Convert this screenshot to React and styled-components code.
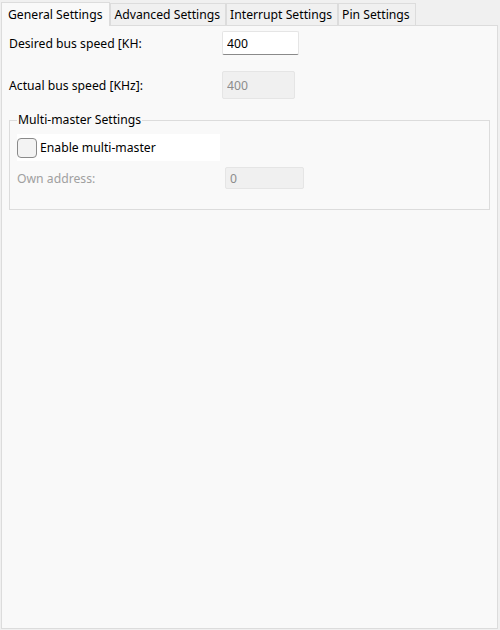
import styled, { createGlobalStyle } from "styled-components";

const GlobalStyle = createGlobalStyle`
  html, body {
    margin: 0;
    padding: 0;
    background: #f0f0f0;
    font-family: "Noto Sans", "Liberation Sans", sans-serif;
    font-size: 12.2px;
    color: #000;
  }
`;

const tabs = ["General Settings", "Advanced Settings", "Interrupt Settings", "Pin Settings"];

export default function App() {
  return (
    <>
      <GlobalStyle />
      <StyledWindow>
        <StyledTabBar>
          {tabs.map((tab, i) => (
            <StyledTab key={tab} $active={i === 0}>
              {tab}
            </StyledTab>
          ))}
        </StyledTabBar>
        <StyledPanel>
          <StyledRow>
            <StyledLabel>Desired bus speed [KH:</StyledLabel>
            <StyledInput defaultValue="400" />
          </StyledRow>
          <StyledRow $height={28}>
            <StyledLabel>Actual bus speed [KHz]:</StyledLabel>
            <StyledInput value="400" disabled readOnly $width={73} $height={28} />
          </StyledRow>
          <StyledGroup>
            <StyledLegend>Multi-master Settings</StyledLegend>
            <StyledCheckRow>
              <StyledCheckbox />
              <span>Enable multi-master</span>
            </StyledCheckRow>
            <StyledRow $indent={7} $height={22}>
              <StyledLabel $disabled $width={208}>Own address:</StyledLabel>
              <StyledInput value="0" disabled readOnly $width={79} $height={22} />
            </StyledRow>
          </StyledGroup>
        </StyledPanel>
      </StyledWindow>
    </>
  );
}

const StyledWindow = styled.div`
  width: 500px;
  height: 630px;
  display: flex;
  flex-direction: column;
`;

const StyledTabBar = styled.div`
  display: flex;
  align-items: flex-end;
  height: 25px;
  padding-left: 1px;
`;

const StyledTab = styled.div`
  height: ${(p) => (p.$active ? "24px" : "22px")};
  box-sizing: border-box;
  padding: 0 ${(p) => (p.$active ? "7px" : "5px")} 1px ${(p) => (p.$active ? "6px" : "3px")};
  display: flex;
  align-items: center;
  background: ${(p) => (p.$active ? "#f9f9f9" : "#f0f0f0")};
  border: 1px solid #dcdcdc;
  border-bottom: none;
  margin-bottom: ${(p) => (p.$active ? "-1px" : "0")};
  position: relative;
  z-index: ${(p) => (p.$active ? 1 : 0)};
  white-space: nowrap;
`;

const StyledPanel = styled.div`
  flex: 1;
  margin: 0 2px 1px 1px;
  background: #f9f9f9;
  border: 1px solid #dcdcdc;
  padding: 5px 7px 0 7px;
  display: flex;
  flex-direction: column;
`;

const StyledRow = styled.div`
  display: flex;
  align-items: center;
  height: ${(p) => p.$height || 24}px;
  margin-bottom: 16px;
  padding-left: ${(p) => p.$indent || 0}px;
`;

const StyledLabel = styled.span`
  width: ${(p) => p.$width || 213}px;
  color: ${(p) => (p.$disabled ? "#a0a0a0" : "#000")};
`;

const StyledInput = styled.input`
  box-sizing: border-box;
  width: ${(p) => p.$width || 77}px;
  height: ${(p) => p.$height || 24}px;
  padding: 0 4px;
  font-family: "Noto Sans", "Liberation Sans", sans-serif;
  font-size: 12.2px;
  color: #000;
  background: #fff;
  border: 1px solid #e5e5e5;
  border-bottom-color: #8a8a8a;
  border-radius: 2px;
  outline: none;

  &:disabled {
    background: #f0f0f0;
    color: #8c8c8c;
    border-bottom-color: #e5e5e5;
  }
`;

const StyledGroup = styled.fieldset`
  margin: -7px 0 0 0;
  width: 481px;
  box-sizing: border-box;
  border: 1px solid #dcdcdc;
  padding: 2px 0 4px 0;
`;

const StyledLegend = styled.legend`
  padding: 0 1px;
  margin-left: 7px;
  line-height: 24px;
`;

const StyledCheckRow = styled.div`
  display: flex;
  align-items: center;
  gap: 3px;
  width: 203px;
  height: 27px;
  margin-left: 7px;
  margin-bottom: 6px;
  background: #fff;
`;

const StyledCheckbox = styled.span`
  width: 20px;
  height: 20px;
  box-sizing: border-box;
  border: 1px solid #8a8a8a;
  border-radius: 4px;
  background: #f3f3f3;
`;
